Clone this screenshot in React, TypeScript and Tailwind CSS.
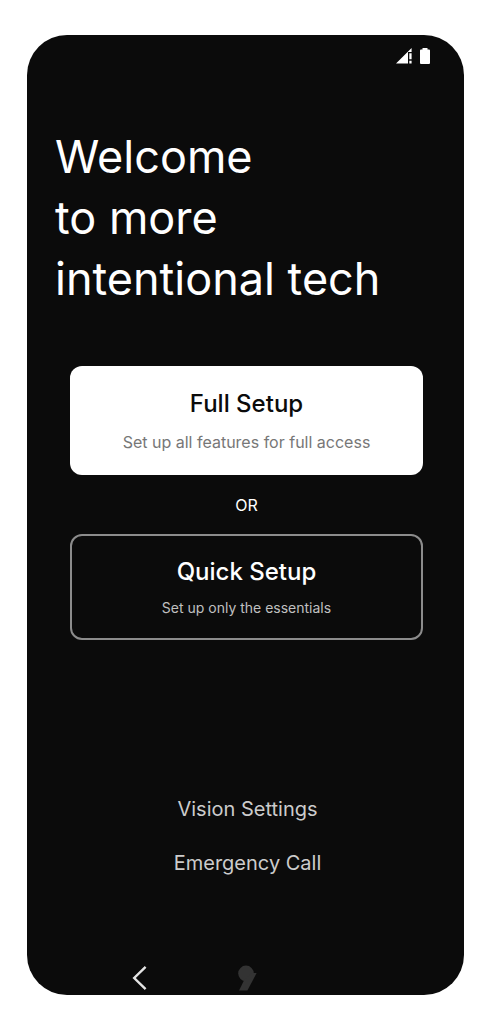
const StatusIcons = () => (
  <div className="flex h-4 items-center justify-end gap-2 pr-[34px] text-white">
    <svg width="16" height="16" viewBox="0 0 16 16" fill="currentColor" aria-label="No signal">
      <path d="M0 15.5 15.6 0v4H12v11.5z" />
      <path d="M13.3 5.2h2.3v6h-2.3zM13.3 12.8h2.3v2.7h-2.3z" />
    </svg>
    <svg width="10" height="16" viewBox="0 0 10 16" fill="currentColor" aria-label="Battery full">
      <path d="M2.5 0h5v1.5H9q1 0 1 1V15q0 1-1 1H1q-1 0-1-1V2.5q0-1 1-1h1.5z" />
    </svg>
  </div>
)

const NavBar = () => (
  <nav className="mt-auto flex h-[34px] items-center pl-26">
    <button type="button" aria-label="Back" className="text-[#e4e4e4]">
      <svg width="18" height="26" viewBox="0 0 18 26" fill="none" stroke="currentColor" strokeWidth="2.4">
        <path d="M14.6 1.8 3.2 13l11.4 11.2" />
      </svg>
    </button>
    <button type="button" aria-label="Home" className="ml-22 text-[#333333]">
      <svg width="20" height="26" viewBox="0 0 20 26" fill="currentColor">
        <circle cx="9" cy="8.4" r="7.8" />
        <path d="M15 8h4.6L10.4 25.4H2L7.2 15z" />
      </svg>
    </button>
  </nav>
)

const App = () => {
  return (
    <div className="min-h-screen bg-white pt-[35px] pr-9 pb-[26px] pl-[27px] font-['Inter',sans-serif]">
      <main className="flex min-h-[960px] flex-col overflow-hidden rounded-[40px] bg-[#0b0b0b] pt-[13px]">
        <StatusIcons />

        <h1 className="mt-[62px] pl-7 text-[45px] leading-[61px] text-white">
          Welcome
          <br />
          to more
          <br />
          intentional tech
        </h1>

        <div className="mt-[57px] flex flex-col pr-[41px] pl-[43px] text-center">
          <button type="button" className="flex h-[109px] flex-col items-center rounded-xl bg-white pt-[22px]">
            <span className="text-2xl font-medium text-[#0b0b0b]">Full Setup</span>
            <span className="mt-[10px] text-base text-[#777777]">Set up all features for full access</span>
          </button>
          <p className="flex h-[59px] items-center justify-center text-base text-white">OR</p>
          <button
            type="button"
            className="flex h-[106px] flex-col items-center rounded-xl border-2 border-[#8c8c8c] pt-5"
          >
            <span className="text-2xl font-medium text-white">Quick Setup</span>
            <span className="mt-[10px] text-sm text-[#c0c0c0]">Set up only the essentials</span>
          </button>
        </div>

        <div className="mt-[153px] flex flex-col items-center gap-[22px] pl-1 text-[#cccccc]">
          <a href="#vision" className="text-xl leading-8">
            Vision Settings
          </a>
          <a href="#emergency" className="text-xl leading-8">
            Emergency Call
          </a>
        </div>

        <NavBar />
      </main>
    </div>
  )
}

export default App
